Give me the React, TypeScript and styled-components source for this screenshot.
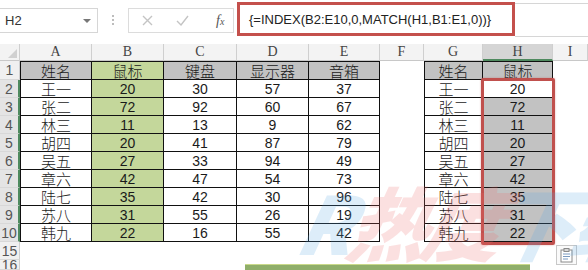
import * as React from 'react';
import styled, { createGlobalStyle } from 'styled-components';

const GlobalStyle = createGlobalStyle`
  html, body {
    margin: 0;
    padding: 0;
    background: #fff;
    overflow: hidden;
  }
  body {
    width: 588px;
    height: 270px;
    font-family: 'Liberation Sans', Arial, sans-serif;
  }
`;

const Page = styled.div`
  position: relative;
  width: 588px;
  height: 270px;
  overflow: hidden;
  background: #fff;
`;

const TopBar = styled.div`
  display: flex;
  align-items: flex-start;
  height: 44px;
  background: #fff;
`;

const NameBox = styled.div`
  display: flex;
  align-items: center;
  justify-content: space-between;
  box-sizing: border-box;
  width: 98px;
  height: 25px;
  margin-top: 8px;
  padding: 0 6px 0 5px;
  border: 1px solid #d6d6d6;
  border-left: none;
  font-size: 13px;
  color: #333;
`;

const Caret = styled.span`
  width: 0;
  height: 0;
  border-left: 4px solid transparent;
  border-right: 4px solid transparent;
  border-top: 4px solid #777;
`;

const Dots = styled.div`
  display: flex;
  flex-direction: column;
  gap: 2px;
  margin: 15px 0 0 14px;

  span {
    width: 2px;
    height: 2px;
    background: #bdbdbd;
  }
`;

const FuncButtons = styled.div`
  display: flex;
  align-items: center;
  box-sizing: border-box;
  width: 106px;
  height: 25px;
  margin: 8px 0 0 14px;
  padding-left: 13px;
  border: 1px solid #dcdcdc;
  gap: 23px;
`;

const Fx = styled.span`
  margin-left: 4px;
  font-family: 'Liberation Serif', 'Times New Roman', serif;
  font-style: italic;
  font-size: 14px;
  color: #555;

  sub {
    font-size: 10px;
    vertical-align: 0;
  }
`;

const FormulaBox = styled.div`
  display: flex;
  align-items: center;
  box-sizing: border-box;
  width: 278px;
  height: 34px;
  margin: 2px 0 0 3px;
  padding-left: 9px;
  border: 3px solid #c4504c;
  font-size: 13px;
  color: #222;
  white-space: nowrap;
`;

const FormulaRest = styled.div`
  flex: 1;
  height: 32px;
  margin-top: 3px;
  border-top: 1px solid #d6d6d6;
  border-bottom: 1px solid #d6d6d6;
`;

const Sheet = styled.div`
  display: grid;
  grid-template-columns: 20px 72px 72px 73px 72px 71px 44px 59px 70px 1fr;
  grid-template-rows: 17px 19px repeat(9, 18px) 18px 1fr;
  height: 226px;
`;

const Corner = styled.div`
  position: relative;
  box-sizing: border-box;
  background: #f3f3f3;
  border-right: 1px solid #cfcfcf;
  border-bottom: 1px solid #c8c8c8;

  &::after {
    content: '';
    position: absolute;
    right: 2px;
    bottom: 2px;
    border-left: 9px solid transparent;
    border-bottom: 9px solid #d0d0d0;
  }
`;

const ColHead = styled.div<{ $active?: boolean }>`
  display: flex;
  align-items: center;
  justify-content: center;
  box-sizing: border-box;
  background: ${(p) => (p.$active ? '#d5d5d5' : '#f3f3f3')};
  border-right: 1px solid #cfcfcf;
  border-bottom: ${(p) => (p.$active ? '2px solid #4f8a5f' : '1px solid #c8c8c8')};
  font-family: 'Liberation Serif', 'Times New Roman', serif;
  font-size: 14px;
  line-height: 1;
  color: #444;
`;

const RowHead = styled.div<{ $active?: boolean }>`
  display: flex;
  align-items: center;
  justify-content: center;
  box-sizing: border-box;
  overflow: hidden;
  background: ${(p) => (p.$active ? '#e4e4e4' : '#f0f0f0')};
  border-right: ${(p) => (p.$active ? '2px solid #4f8a5f' : '1px solid #cfcfcf')};
  border-bottom: 1px solid #d8d8d8;
  font-size: 14px;
  line-height: 1;
  color: #555;
`;

const Cell = styled.div<{ $bg?: string; $boxed?: boolean; $left?: boolean; $top?: boolean; $cjk?: boolean }>`
  display: flex;
  align-items: center;
  justify-content: center;
  box-sizing: border-box;
  background: ${(p) => p.$bg || '#fff'};
  border-right: ${(p) => (p.$boxed ? '1px solid #111' : 'none')};
  border-bottom: ${(p) => (p.$boxed ? '1px solid #111' : 'none')};
  border-left: ${(p) => (p.$left ? '1px solid #111' : 'none')};
  border-top: ${(p) => (p.$top ? '1px solid #111' : 'none')};
  font-family: ${(p) =>
    p.$cjk ? "'Noto Sans CJK SC', sans-serif" : "'Liberation Sans', Arial, sans-serif"};
  font-weight: ${(p) => (p.$cjk ? 300 : 400)};
  font-size: ${(p) => (p.$cjk ? '15px' : '14px')};
  line-height: 1;
  color: #1a1a1a;
`;

const Filler = styled.div`
  background: #fff;
`;

const BottomStrip = styled.div`
  grid-column: 2 / -1;
  display: flex;
  align-items: flex-end;
`;

const GreenBar = styled.div`
  width: 285px;
  height: 5px;
  margin-left: 225px;
  background: #8fae6a;
  border-top: 1px solid #c9d98a;
`;

const Selection = styled.div`
  position: absolute;
  left: 481px;
  top: 78px;
  width: 74px;
  height: 167px;
  box-sizing: border-box;
  border: 3px solid #c0504d;
  border-radius: 2px;
  box-shadow: 0 0 2px rgba(192, 80, 77, 0.5);
  pointer-events: none;
`;

const PasteButton = styled.div`
  position: absolute;
  left: 556px;
  top: 245px;
  width: 21px;
  height: 20px;
  box-sizing: border-box;
  display: flex;
  align-items: center;
  justify-content: center;
  background: #fafafa;
  border: 1px solid #c8c8c8;
`;

const Watermark = styled.div`
  position: absolute;
  left: 300px;
  top: 180px;
  display: flex;
  font-family: 'Noto Sans CJK SC', sans-serif;
  font-weight: 900;
  font-style: italic;
  font-size: 80px;
  line-height: 1;
  letter-spacing: -6px;
  white-space: nowrap;
  opacity: 0.2;
  pointer-events: none;
  transform: skewX(-12deg);
`;

const Mark = styled.span<{ $color: string }>`
  color: ${(p) => p.$color};
`;

const cols = ['A', 'B', 'C', 'D', 'E', 'F', 'G', 'H', 'I'];
const names = ['王一', '张二', '林三', '胡四', '吴五', '章六', '陆七', '苏八', '韩九'];
const mouse = [20, 72, 11, 20, 27, 42, 35, 31, 22];
const keyboard = [30, 92, 13, 41, 33, 47, 42, 55, 16];
const monitor = [57, 60, 9, 87, 94, 54, 30, 26, 55];
const speaker = [37, 67, 62, 79, 49, 73, 96, 19, 42];

const GRAY = '#c2c2c2';
const GREEN = '#c4d79b';

function CrossIcon() {
  return (
    <svg width="11" height="11" viewBox="0 0 11 11">
      <path d="M1 1 L10 10 M10 1 L1 10" stroke="#c4c4c4" strokeWidth="1.4" fill="none" />
    </svg>
  );
}

function CheckIcon() {
  return (
    <svg width="13" height="11" viewBox="0 0 13 11">
      <path d="M1 6 L5 10 L12 1" stroke="#c4c4c4" strokeWidth="1.4" fill="none" />
    </svg>
  );
}

function PasteIcon() {
  return (
    <svg width="13" height="15" viewBox="0 0 13 15">
      <rect x="1" y="2" width="11" height="12" fill="#fff" stroke="#8a8a8a" />
      <rect x="4" y="0.5" width="5" height="3" fill="#d8d8d8" stroke="#8a8a8a" />
      <path d="M3 6 H10 M3 8.5 H10 M3 11 H8" stroke="#7a9ac0" strokeWidth="1" />
    </svg>
  );
}

export default function App() {
  const header = ['姓名', '鼠标', '键盘', '显示器', '音箱'];
  return (
    <Page>
      <GlobalStyle />
      <TopBar>
        <NameBox>
          <span>H2</span>
          <Caret />
        </NameBox>
        <Dots>
          <span />
          <span />
          <span />
        </Dots>
        <FuncButtons>
          <CrossIcon />
          <CheckIcon />
          <Fx>
            f<sub>x</sub>
          </Fx>
        </FuncButtons>
        <FormulaBox>{'{=INDEX(B2:E10,0,MATCH(H1,B1:E1,0))}'}</FormulaBox>
        <FormulaRest />
      </TopBar>

      <Sheet>
        <Corner />
        {cols.map((c) => (
          <ColHead key={c} $active={c === 'H'}>
            {c}
          </ColHead>
        ))}

        <RowHead>1</RowHead>
        {header.map((h, i) => (
          <Cell key={h} $boxed $top $left={i === 0} $cjk $bg={i === 1 ? GREEN : GRAY}>
            {h}
          </Cell>
        ))}
        <Filler />
        <Cell $boxed $top $left $cjk $bg={GRAY}>
          姓名
        </Cell>
        <Cell $boxed $top $cjk $bg={GRAY}>
          鼠标
        </Cell>
        <Filler />

        {names.map((n, i) => (
          <React.Fragment key={n}>
            <RowHead $active>{i + 2}</RowHead>
            <Cell $boxed $left $cjk>
              {n}
            </Cell>
            <Cell $boxed $bg={GREEN}>
              {mouse[i]}
            </Cell>
            <Cell $boxed>{keyboard[i]}</Cell>
            <Cell $boxed>{monitor[i]}</Cell>
            <Cell $boxed>{speaker[i]}</Cell>
            <Filler />
            <Cell $boxed $left $cjk>
              {n}
            </Cell>
            <Cell $boxed $bg={i === 0 ? '#fff' : GRAY}>
              {mouse[i]}
            </Cell>
            <Filler />
          </React.Fragment>
        ))}

        <RowHead>15</RowHead>
        {cols.map((c) => (
          <Filler key={'r15' + c} />
        ))}

        <RowHead>16</RowHead>
        <BottomStrip>
          <GreenBar />
        </BottomStrip>
      </Sheet>

      <Selection />
      <PasteButton>
        <PasteIcon />
      </PasteButton>
      <Watermark>
        <Mark $color="#5aa9e6">R</Mark>
        <Mark $color="#f06a6a">热度</Mark>
        <Mark $color="#5aa9e6">下载</Mark>
      </Watermark>
    </Page>
  );
}
